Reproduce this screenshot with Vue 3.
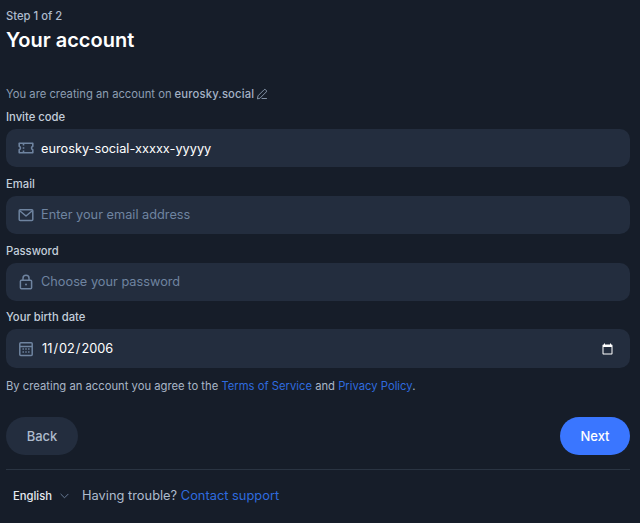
<template>
  <div class="page">
    <div class="step">Step 1 of 2</div>
    <h1 class="title">Your account</h1>

    <p class="server">
      <span>You are creating an account on</span>
      <span class="server-name">eurosky.social</span>
      <svg class="pencil" viewBox="0 0 12 12" width="12" height="12" fill="none" stroke="currentColor" stroke-width="0.9" stroke-linejoin="round" stroke-linecap="round">
        <path d="M1.5 10.5 2 7.8 8 1.8a1.2 1.2 0 0 1 1.7 0l.5.5a1.2 1.2 0 0 1 0 1.7l-6 6z" />
        <path d="M6 10.5h4.5" />
      </svg>
    </p>

    <div class="fields">
      <div class="field">
        <label class="label">Invite code</label>
        <div class="control">
          <svg class="icon" viewBox="0 0 16 16" width="16" height="16" fill="none" stroke="currentColor" stroke-width="1.6" stroke-linejoin="round">
            <path d="M1.2 3.2h13.6v3a1.9 1.9 0 0 0 0 3.6v3H1.2v-3a1.9 1.9 0 0 0 0-3.6z" />
            <path d="M5.5 3.5v2M5.5 7.2v1.6M5.5 10.5v2" />
          </svg>
          <input class="input" type="text" value="eurosky-social-xxxxx-yyyyy" />
        </div>
      </div>

      <div class="field">
        <label class="label">Email</label>
        <div class="control">
          <svg class="icon" viewBox="0 0 16 16" width="16" height="16" fill="none" stroke="currentColor" stroke-width="1.5" stroke-linejoin="round" stroke-linecap="round">
            <rect x="1.2" y="2.8" width="13.6" height="10.8" rx="1" />
            <path d="M2 4l6 5 6-5" />
          </svg>
          <input class="input" type="email" placeholder="Enter your email address" />
        </div>
      </div>

      <div class="field">
        <label class="label">Password</label>
        <div class="control">
          <svg class="icon" viewBox="0 0 16 16" width="16" height="16" fill="none" stroke="currentColor" stroke-width="1.5" stroke-linejoin="round">
            <rect x="2.4" y="6.2" width="11.2" height="8.6" rx="1" />
            <path d="M5 6.2V4.2a3 3 0 0 1 6 0v2" />
            <circle cx="8" cy="10.5" r="1" fill="currentColor" stroke="none" />
          </svg>
          <input class="input" type="password" placeholder="Choose your password" />
        </div>
      </div>

      <div class="field">
        <label class="label">Your birth date</label>
        <div class="control control-date">
          <svg class="icon" viewBox="0 0 16 16" width="16" height="16" fill="none" stroke="currentColor" stroke-width="1.5" stroke-linejoin="round">
            <rect x="1.8" y="1.8" width="12.4" height="12.8" rx="1" />
            <path d="M2 5.5h12" />
            <path d="M4.5 8h7M4.5 11h7" stroke-width="1.3" stroke-dasharray="1.4 1.4" />
          </svg>
          <input class="input input-date" type="date" value="2006-11-02" />
        </div>
      </div>
    </div>

    <p class="terms">
      By creating an account you agree to the <a class="link">Terms of Service</a> and
      <a class="link">Privacy Policy</a>.
    </p>

    <div class="actions">
      <button class="btn btn-back">Back</button>
      <button class="btn btn-next">Next</button>
    </div>

    <div class="footer">
      <div class="lang">
        <span>English</span>
        <svg viewBox="0 0 10 6" width="9" height="6" fill="none" stroke="currentColor" stroke-width="1" stroke-linecap="round" stroke-linejoin="round">
          <path d="M1 1l4 4 4-4" />
        </svg>
      </div>
      <div class="help">Having trouble? <a class="link">Contact support</a></div>
    </div>
  </div>
</template>

<script setup>
</script>

<style>
html,
body {
  background: #161d29;
}
</style>

<style scoped>
.page {
  box-sizing: border-box;
  width: 640px;
  height: 523px;
  padding: 9px 10px 0 6px;
  background: #161d29;
  font-family: Inter, "Liberation Sans", sans-serif;
  color: #fff;
  overflow: hidden;
}

.step {
  font-size: 11.25px;
  line-height: 14px;
  font-weight: 500;
  color: #aebbcd;
}

.title {
  margin: 4px 0 0;
  font-size: 20px;
  line-height: 26px;
  font-weight: 600;
}

.server {
  display: flex;
  align-items: center;
  margin: 34px 0 0;
  font-size: 11.25px;
  line-height: 14px;
  color: #8d9db2;
}

.server-name {
  margin-left: 3px;
  font-weight: 500;
  letter-spacing: 0.15px;
  color: #a4b2c5;
}

.pencil {
  margin-left: 2px;
  color: #8d9db2;
}

.fields {
  display: flex;
  flex-direction: column;
  gap: 9.8px;
  margin-top: 9px;
}

.field {
  display: flex;
  flex-direction: column;
  gap: 5px;
}

.label {
  font-size: 11.25px;
  line-height: 14px;
  font-weight: 500;
  color: #c3cedb;
}

.control {
  display: flex;
  align-items: center;
  height: 38px;
  padding: 0 12px;
  border-radius: 10px;
  background: #232d3e;
}

.control-date {
  height: 39px;
  padding-right: 14px;
}

.icon {
  flex: none;
  color: #6f84a0;
}

.input {
  flex: 1;
  min-width: 0;
  margin-left: 7px;
  padding: 0;
  border: 0;
  outline: 0;
  background: transparent;
  font-family: inherit;
  font-size: 12.75px;
  color: #fff;
  color-scheme: dark;
}

.input::placeholder {
  color: #6f84a0;
  opacity: 1;
}

.terms {
  margin: 11px 0 0;
  font-size: 11.25px;
  line-height: 14px;
  color: #a9b6c7;
}

.link {
  color: #2f6bdf;
}

.actions {
  display: flex;
  justify-content: space-between;
  margin-top: 24px;
}

.btn {
  height: 38px;
  border: 0;
  border-radius: 19px;
  font-family: inherit;
  font-size: 13px;
  font-weight: 500;
}

.btn-back {
  width: 72px;
  background: #232d3e;
  color: #aebbcd;
}

.btn-next {
  width: 70px;
  background: #3a76ff;
  color: #fff;
}

.footer {
  display: flex;
  align-items: center;
  margin-top: 14px;
  padding: 17px 0 0 7px;
  border-top: 1px solid #2a3442;
}

.lang {
  display: flex;
  align-items: center;
  gap: 8px;
  font-size: 11.25px;
  line-height: 16px;
  font-weight: 500;
  color: #e4e9f0;
}

.lang svg {
  color: #6f84a0;
}

.help {
  margin-left: 13px;
  font-size: 12.85px;
  line-height: 18px;
  color: #aebbcd;
}
</style>
